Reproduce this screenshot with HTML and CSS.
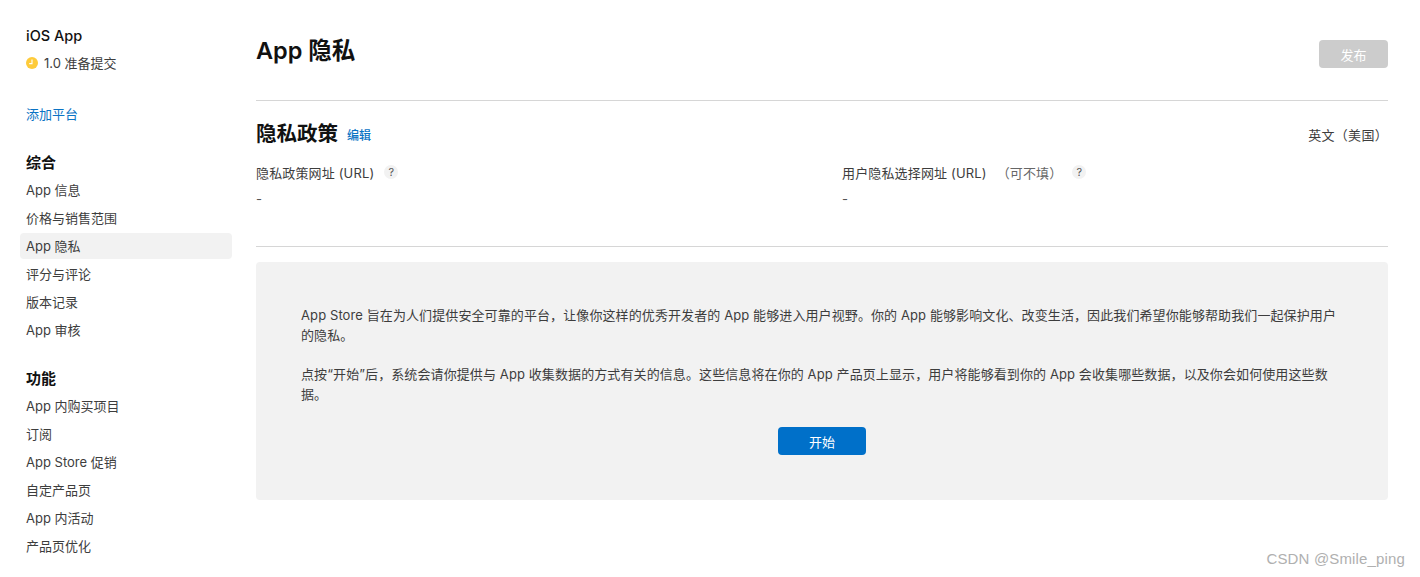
FILE: index.html
```html
<!DOCTYPE html>
<html lang="zh-CN">
<head>
<meta charset="utf-8">
<title>App 隐私</title>
<link rel="stylesheet" href="styles.css">
</head>
<body>
<div class="page">
  <aside class="sidebar">
    <div class="app-name">iOS App</div>
    <div class="status">
      <svg class="status-icon" width="12" height="12" viewBox="0 0 12 12"><circle cx="6" cy="6" r="6" fill="#fecb3a"/><path d="M6 2.6V6.6H3.2" fill="none" stroke="#fff" stroke-width="1.1"/></svg>
      <span>1.0 准备提交</span>
    </div>
    <a class="add-platform">添加平台</a>
    <h3 class="nav-title">综合</h3>
    <ul class="nav">
      <li>App 信息</li>
      <li>价格与销售范围</li>
      <li class="active">App 隐私</li>
      <li>评分与评论</li>
      <li>版本记录</li>
      <li>App 审核</li>
    </ul>
    <h3 class="nav-title second">功能</h3>
    <ul class="nav">
      <li>App 内购买项目</li>
      <li>订阅</li>
      <li>App Store 促销</li>
      <li>自定产品页</li>
      <li>App 内活动</li>
      <li>产品页优化</li>
    </ul>
  </aside>
  <main class="main">
    <header class="head">
      <h1>App 隐私</h1>
      <button class="publish">发布</button>
    </header>
    <section class="policy">
      <div class="policy-head">
        <h2>隐私政策</h2>
        <a class="edit">编辑</a>
        <span class="locale">英文（美国）</span>
      </div>
      <div class="fields">
        <div class="field">
          <div class="label"><span>隐私政策网址 (URL)</span><i class="help">?</i></div>
          <div class="value">-</div>
        </div>
        <div class="field">
          <div class="label"><span>用户隐私选择网址 (URL)</span><span class="optional">（可不填）</span><i class="help">?</i></div>
          <div class="value">-</div>
        </div>
      </div>
    </section>
    <section class="panel">
      <p>App Store 旨在为人们提供安全可靠的平台，让像你这样的优秀开发者的 App 能够进入用户视野。你的 App 能够影响文化、改变生活，因此我们希望你能够帮助我们一起保护用户的隐私。</p>
      <p>点按“开始”后，系统会请你提供与 App 收集数据的方式有关的信息。这些信息将在你的 App 产品页上显示，用户将能够看到你的 App 会收集哪些数据，以及你会如何使用这些数据。</p>
      <button class="start">开始</button>
    </section>
  </main>
</div>
<div class="watermark">CSDN @Smile_ping</div>
</body>
</html>
```
FILE: styles.css
```css
* { box-sizing: border-box; }
html, body { margin: 0; padding: 0; height: 577px; overflow: hidden; background: #fff; }
body { font-family: Inter, "Noto Sans CJK SC", sans-serif; font-size: 13px; color: #3d3d3d; position: relative; }
.page { display: flex; padding: 0 32px 0 20px; }
.sidebar { width: 212px; flex: none; padding-top: 26px; }
.app-name { padding-left: 6px; font-size: 14.5px; font-weight: 500; line-height: 20px; color: #111; }
.status { display: flex; align-items: center; gap: 6px; padding-left: 6px; margin-top: 7px; height: 20px; }
.status span { position: relative; top: -1px; }
.status-icon { flex: none; }
.add-platform { display: block; padding-left: 6px; margin-top: 31px; line-height: 20px; color: #0a73c4; }
.nav-title { margin: 29px 0 0; padding-left: 6px; font-size: 15px; font-weight: 700; line-height: 20px; color: #111; }
.nav-title.second { margin-top: 26px; }
.nav { list-style: none; margin: 4px 0 0; padding: 0; }
.nav li { height: 26px; margin-bottom: 2px; padding-left: 6px; line-height: 26px; border-radius: 4px; }
.nav li.active { background: #f2f2f2; }
.main { flex: 1; min-width: 0; margin-left: 24px; }
.head { display: flex; justify-content: space-between; align-items: flex-start; height: 101px; border-bottom: 1px solid #d6d6d6; padding-top: 33px; }
h1 { margin: 0; font-size: 23.5px; font-weight: 600; line-height: 36px; color: #111; }
.publish { margin-top: 7px; width: 69px; height: 28px; border: 0; border-radius: 4px; background: #ccc; color: #fff; font: inherit; }
.policy { height: 146px; padding-top: 20px; border-bottom: 1px solid #d6d6d6; }
.policy-head { display: flex; align-items: center; height: 26px; }
h2 { margin: 0; font-size: 20.5px; font-weight: 600; line-height: 26px; color: #111; }
.edit { margin-left: 9px; font-size: 12px; font-weight: 500; color: #0a73c4; }
.locale { margin-left: auto; letter-spacing: 0.3px; }
.fields { display: grid; grid-template-columns: 586px 1fr; margin-top: 11px; letter-spacing: 0.15px; }
.label { display: flex; align-items: center; height: 28px; }
.optional { margin-left: 10px; color: #666; }
.help { width: 14px; height: 14px; margin-left: 10px; border-radius: 50%; background: #f2f2f2; font-size: 11px; font-style: normal; line-height: 14px; text-align: center; color: #555; }
.optional + .help { margin-left: 10px; }
.value { margin-top: 3px; line-height: 20px; color: #555; }
.panel { margin-top: 15px; height: 238px; padding: 44px 45px 0; background: #f2f2f2; border-radius: 4px; display: flow-root; font-size: 13px; letter-spacing: 0.1px; color: #3d3d3d; text-align: center; }
.panel p { margin: 0 0 20px; line-height: 19.5px; text-align: left; }
.start { display: block; width: 88px; height: 28px; margin: 23px auto 0; border: 0; border-radius: 4px; background: #0070c9; color: #fff; font: inherit; font-weight: 400; }
.watermark { position: absolute; right: 15px; top: 549px; font-family: "Liberation Sans", sans-serif; font-size: 15px; line-height: 20px; color: #b0b0b0; letter-spacing: 0.15px; }
```
